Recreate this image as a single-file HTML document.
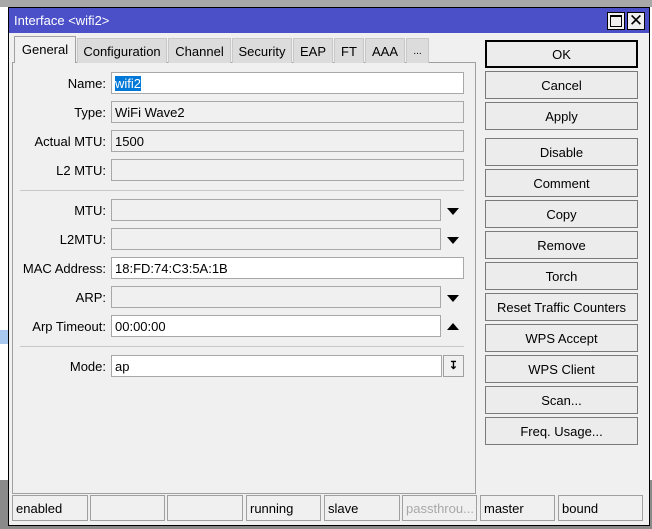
<!DOCTYPE html><html><head><style>
*{box-sizing:border-box}body{margin:0;width:652px;height:529px;position:relative;overflow:hidden;background:#fff;font-family:"Liberation Sans",sans-serif;font-size:13px;color:#000}
.a{position:absolute}
.win{left:8px;top:7px;width:642px;height:519px;border:1px solid #000;background:#f0f0f0}
.title{left:9px;top:8px;width:640px;height:25px;background:#4b50c8;color:#fff;font-size:13px;line-height:26px;padding-left:5px}
.tb{top:12px;width:18px;height:18px;border:1px solid #000;background:#f0f0f0}
.tab{top:38px;height:25px;background:#dcdcdc;border:1px solid #c8c8c8;border-bottom:none;line-height:26px;text-align:center}
.panel{left:12px;top:62px;width:464px;height:432px;border:1px solid #a0a0a0;background:#f0f0f0}
.lbl{left:12px;width:94px;text-align:right;line-height:23px}
.in{left:111px;height:22px;border:1px solid #a8a8a8;background:#f0f0f0;line-height:21px;padding-left:3px}
.w{background:#fff}
.btn{left:485px;width:153px;height:28px;border:1px solid #7a7a7a;background:#ececec;text-align:center;line-height:28px}
.sep{left:20px;width:444px;height:1px;background:#c8c8c8}
.tri{left:447px;width:0;height:0;border-left:6px solid transparent;border-right:6px solid transparent}
.st{top:495px;height:26px;border:1px solid #a0a0a0;line-height:26px;padding-left:3px}
</style></head><body>
<div class="a" style="left:0;top:0;width:652px;height:7px;background:#a8a8a8"></div>
<div class="a" style="left:0;top:480px;width:652px;height:49px;background:#8a8a8a"></div>
<div class="a" style="left:0;top:330px;width:8px;height:14px;background:#a8c8f0"></div>
<div class="a win"></div>
<div class="a title">Interface &lt;wifi2&gt;</div>
<div class="a tb" style="left:607px"><div class="a" style="left:2px;top:2px;width:12px;height:12px;border:1px solid #000;border-top-width:2px"></div></div>
<div class="a tb" style="left:627px;text-align:center;line-height:15px;font-size:17px;color:#000">✕</div>
<div class="a panel"></div>
<div class="a tab" style="left:14px;top:36px;height:27px;width:62px;background:#f0f0f0;border-color:#a0a0a0">General</div>
<div class="a tab" style="left:77px;width:90px">Configuration</div>
<div class="a tab" style="left:168px;width:63px">Channel</div>
<div class="a tab" style="left:232px;width:60px">Security</div>
<div class="a tab" style="left:293px;width:40px">EAP</div>
<div class="a tab" style="left:334px;width:30px">FT</div>
<div class="a tab" style="left:365px;width:40px">AAA</div>
<div class="a tab" style="left:406px;width:23px;font-size:10px">...</div>

<div class="a lbl" style="top:72px">Name:</div><div class="a in w" style="top:72px;width:353px"><span style="background:#0078d7;color:#fff">wifi2</span></div>
<div class="a lbl" style="top:101px">Type:</div><div class="a in" style="top:101px;width:353px">WiFi Wave2</div>
<div class="a lbl" style="top:130px">Actual MTU:</div><div class="a in" style="top:130px;width:353px">1500</div>
<div class="a lbl" style="top:159px">L2 MTU:</div><div class="a in" style="top:159px;width:353px"></div>
<div class="a sep" style="top:190px"></div>
<div class="a lbl" style="top:199px">MTU:</div><div class="a in" style="top:199px;width:330px"></div><div class="a tri" style="top:208px;border-top:7px solid #000"></div>
<div class="a lbl" style="top:228px">L2MTU:</div><div class="a in" style="top:228px;width:330px"></div><div class="a tri" style="top:237px;border-top:7px solid #000"></div>
<div class="a lbl" style="top:257px">MAC Address:</div><div class="a in w" style="top:257px;width:353px">18:FD:74:C3:5A:1B</div>
<div class="a lbl" style="top:286px">ARP:</div><div class="a in" style="top:286px;width:330px"></div><div class="a tri" style="top:295px;border-top:7px solid #000"></div>
<div class="a lbl" style="top:315px">Arp Timeout:</div><div class="a in w" style="top:315px;width:330px">00:00:00</div><div class="a tri" style="top:323px;border-bottom:7px solid #000"></div>
<div class="a sep" style="top:346px"></div>
<div class="a lbl" style="top:355px">Mode:</div><div class="a in w" style="top:355px;width:331px">ap</div>
<div class="a" style="left:443px;top:355px;width:21px;height:22px;border:1px solid #a0a0a0;background:#f0f0f0;text-align:center;line-height:20px;font-size:11px;font-weight:bold">↧</div>

<div class="a btn" style="top:40px;border:2px solid #000;line-height:26px">OK</div>
<div class="a btn" style="top:71px">Cancel</div>
<div class="a btn" style="top:102px">Apply</div>
<div class="a btn" style="top:138px">Disable</div>
<div class="a btn" style="top:169px">Comment</div>
<div class="a btn" style="top:200px">Copy</div>
<div class="a btn" style="top:231px">Remove</div>
<div class="a btn" style="top:262px">Torch</div>
<div class="a btn" style="top:293px">Reset Traffic Counters</div>
<div class="a btn" style="top:324px">WPS Accept</div>
<div class="a btn" style="top:355px">WPS Client</div>
<div class="a btn" style="top:386px">Scan...</div>
<div class="a btn" style="top:417px">Freq. Usage...</div>

<div class="a st" style="left:12px;width:76px">enabled</div>
<div class="a st" style="left:90px;width:75px"></div>
<div class="a st" style="left:167px;width:76px"></div>
<div class="a st" style="left:246px;width:75px">running</div>
<div class="a st" style="left:324px;width:76px">slave</div>
<div class="a st" style="left:402px;width:75px;color:#a8a8a8;overflow:hidden;white-space:nowrap">passthrou...</div>
<div class="a st" style="left:480px;width:75px">master</div>
<div class="a st" style="left:558px;width:85px">bound</div>
</body></html>
